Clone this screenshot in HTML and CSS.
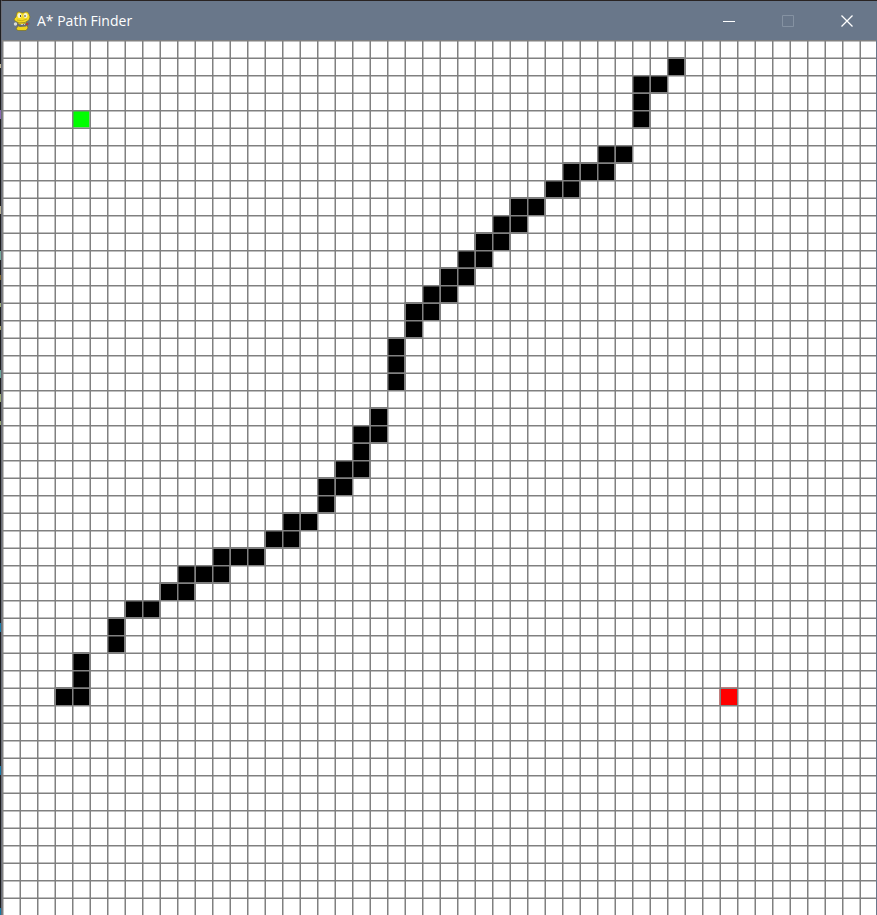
FILE: index.html
```html
<!DOCTYPE html>
<html lang="en">
<head>
<meta charset="utf-8">
<title>A* Path Finder</title>
<link rel="stylesheet" href="styles.css">
</head>
<body>
<div class="desktop">
<div class="window">
<header class="titlebar">
<svg class="app-icon" viewBox="0 0 18 20" aria-hidden="true">
<path d="M5 10h8l1 4 1 3-2 2.500H5L3 18l2-3z" fill="#efd51c" stroke="#6d6424" stroke-width=".6"/>
<path d="M4 1.500Q6 0 8 1.500L10 2l2-1q3-1 4 2l1 3-1 3-4 2.500-6 .5-4-2-1-2 2-2z" fill="#f5dc22" stroke="#7e7426" stroke-width=".7"/>
<ellipse cx="6.500" cy="4.500" rx="2" ry="2.500" fill="#f5f4d8"/>
<ellipse cx="12.500" cy="4.500" rx="2" ry="2.500" fill="#f5f4d8"/>
<path d="M7 4h1v2H7zM11.500 4h1v2h-1z" fill="#4b4d45"/>
<path d="M4 9q5 2 10-1" fill="none" stroke="#b79d1c" stroke-width=".7"/>
<path d="M1 11l3 1 3 1.500 5-1 4-1.500 1 2-4 2.500-6 .5-5-2z" fill="#696b70"/>
<circle cx="2.500" cy="13" r="1.700" fill="#d9dcda"/>
<path d="M8 13h2v1H8zM11 13h1v1h-1z" fill="#c5cacd"/>
<path d="M13 12h2v2h-2z" fill="#b33c38"/>
</svg>
<h1 class="title">A* Path Finder</h1>
<div class="controls">
<button class="control" type="button" aria-label="Minimize"><svg class="glyph" viewBox="0 0 12 12"><path d="M0 6.500h12"/></svg></button>
<button class="control" type="button" aria-label="Maximize" disabled><svg class="glyph" viewBox="0 0 12 12"><path d="M.5.5h11v11H.5z"/></svg></button>
<button class="control" type="button" aria-label="Close"><svg class="glyph close" viewBox="0 0 12 12"><path d="M.5.5l11 11M11.500.5l-11 11"/></svg></button>
</div>
</header>
<main class="board">
<svg class="grid" viewBox="0 0 700 700" role="img" aria-label="Path finding grid">
<g id="cells"></g>
<g id="rules"></g>
</svg>
</main>
</div>
</div>
<script src="grid.js"></script>
</body>
</html>
```
FILE: styles.css
```css
* {
  box-sizing: border-box;
}

body {
  margin: 0;
  background: #1e1e20;
  overflow: hidden;
}

.desktop {
  padding-left: 1px;
  background:
    linear-gradient(#c0b79a, #c0b79a) 0 64px / 1px 4px no-repeat,
    linear-gradient(#8869ae, #8869ae) 0 110px / 1px 9px no-repeat,
    linear-gradient(#b5af94, #b5af94) 0 206px / 1px 8px no-repeat,
    linear-gradient(#74a99b, #74a99b) 0 251px / 1px 9px no-repeat,
    linear-gradient(#82652b, #82652b) 0 275px / 1px 5px no-repeat,
    linear-gradient(#96a673, #96a673) 0 303px / 1px 4px no-repeat,
    linear-gradient(#a2a06b, #a2a06b) 0 326px / 1px 4px no-repeat,
    linear-gradient(#6ba69a, #6ba69a) 0 370px / 1px 8px no-repeat,
    linear-gradient(#96a673, #96a673) 0 394px / 1px 8px no-repeat,
    linear-gradient(#96a673, #96a673) 0 421px / 1px 4px no-repeat,
    linear-gradient(#1679a6, #1679a6) 0 623px / 1px 9px no-repeat,
    linear-gradient(#1679a6, #1679a6) 0 766px / 1px 9px no-repeat,
    linear-gradient(#1679a6, #1679a6) 0 908px / 1px 7px no-repeat,
    #1e1e20;
}

.window {
  position: relative;
  border-top: 1px solid #292322;
  border-left: 1px solid #6b6e78;
}

/* Window edge, drawn over the board's last column. */
.window::after {
  content: "";
  position: absolute;
  top: 0;
  right: 0;
  bottom: 0;
  width: 1px;
  background: #69778a;
}

.titlebar {
  display: flex;
  align-items: center;
  height: 39px;
  padding: 0 1px 0 11px;
  background: #69778a;
}

.app-icon {
  width: 18px;
  height: 20px;
}

.title {
  flex: 1;
  margin: 0;
  padding-left: 6px;
  color: #fff;
  font: 14px/20px "Open Sans", "Noto Sans", sans-serif;
}

.controls {
  display: flex;
  align-self: stretch;
}

.control {
  display: flex;
  align-items: center;
  justify-content: center;
  width: 59px;
  padding: 0;
  border: 0;
  background: transparent;
  color: #fff;
}

.control:disabled {
  color: #8592a2;
}

.glyph {
  width: 12px;
  height: 12px;
  fill: none;
  stroke: currentColor;
}

.close {
  stroke-width: 1.3;
}

.grid {
  display: block;
  width: 100%;
  background: #fff;
}

.line {
  fill: #808080;
}

.wall {
  fill: #000;
}

.start {
  fill: #0f0;
}

.end {
  fill: #f00;
}
```
FILE: grid.js
```js
const CELL = 14;
const COUNT = 50;
const LINE = 1.2;
const SVG = "http://www.w3.org/2000/svg";

// Wall columns, keyed by row.
const walls = {
  1: [38], 2: [36, 37], 3: [36], 4: [36],
  6: [34, 35], 7: [32, 33, 34], 8: [31, 32], 9: [29, 30],
  10: [28, 29], 11: [27, 28], 12: [26, 27], 13: [25, 26],
  14: [24, 25], 15: [23, 24], 16: [23], 17: [22], 18: [22], 19: [22],
  21: [21], 22: [20, 21], 23: [20], 24: [19, 20], 25: [18, 19], 26: [18],
  27: [16, 17], 28: [15, 16], 29: [12, 13, 14], 30: [10, 11, 12],
  31: [9, 10], 32: [7, 8], 33: [6], 34: [6], 35: [4], 36: [4], 37: [3, 4]
};

function addRect(parent, name, x, y, width, height) {
  const rect = document.createElementNS(SVG, "rect");
  const values = { class: name, x, y, width, height };
  for (const key in values) rect.setAttribute(key, values[key]);
  parent.append(rect);
}

function addCell(name, column, row) {
  addRect(document.getElementById("cells"), name, column * CELL, row * CELL, CELL, CELL);
}

for (const row in walls) {
  for (const column of walls[row]) addCell("wall", column, row);
}
addCell("start", 4, 4);
addCell("end", 41, 37);

const rules = document.getElementById("rules");
for (let i = 0; i < COUNT; i++) {
  addRect(rules, "line", i * CELL, 0, LINE, CELL * COUNT);
  addRect(rules, "line", 0, i * CELL, CELL * COUNT, LINE);
}
```
